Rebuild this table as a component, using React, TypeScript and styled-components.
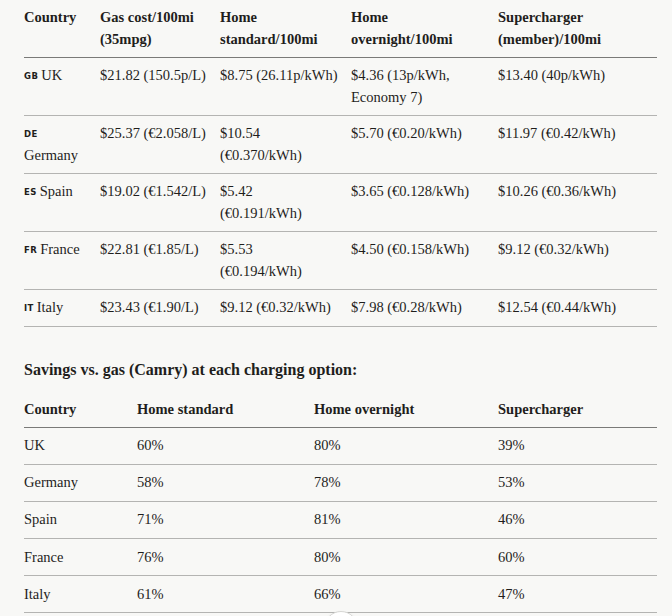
import React from "react";
import styled, { createGlobalStyle } from "styled-components";

const Global = createGlobalStyle`
  html, body {
    margin: 0;
    padding: 0;
    background: #f8f8f6;
  }
  body {
    font-family: "Liberation Serif", "Times New Roman", serif;
    color: #1f1e1c;
  }
`;

const Page = styled.div`
  padding: 0 15px 0 24px;
  min-height: 616px;
`;

const Table = styled.table`
  width: 633px;
  border-collapse: collapse;
  table-layout: fixed;
  font-size: 14.5px;
  line-height: 21.5px;
`;

const HeadCell = styled.th`
  text-align: left;
  vertical-align: top;
  font-weight: 700;
  padding: 7px 8px 7px 0;
  border-bottom: 1.5px solid #7a7a78;
  white-space: pre;
`;

const Row = styled.tr<{ $pad?: number }>`
  border-bottom: 1px solid #b4b4b2;
  td {
    padding-top: ${(p) => p.$pad ?? 7}px;
    padding-bottom: ${(p) => p.$pad ?? 7}px;
  }
`;

const Cell = styled.td`
  vertical-align: top;
  padding: 7px 8px 7px 0;
  white-space: pre;
`;

const Flag = styled.span`
  font-family: "DejaVu Sans", "Liberation Sans", sans-serif;
  font-size: 8.5px;
  font-weight: 600;
  letter-spacing: 0.4px;
  margin-right: 3px;
  vertical-align: 1px;
  line-height: 0;
`;

const Title = styled.h3`
  margin: 31.5px 0 9.5px;
  font-size: 16px;
  line-height: 24px;
  font-weight: 700;
`;

const ScrollButton = styled.div`
  position: fixed;
  left: 324px;
  top: 611px;
  width: 32px;
  height: 32px;
  border-radius: 50%;
  background: #ffffff;
  border: 1px solid #d6d6d3;
  box-shadow: 0 1px 3px rgba(0, 0, 0, 0.08);
`;

type CostRow = { code: string; name: string; cells: string[] };

const costHeaders = [
  "Country",
  "Gas cost/100mi\n(35mpg)",
  "Home\nstandard/100mi",
  "Home\novernight/100mi",
  "Supercharger\n(member)/100mi",
];

const costWidths = [76, 120, 131, 147, 159];

const costRows: CostRow[] = [
  {
    code: "GB",
    name: "UK",
    cells: ["$21.82 (150.5p/L)", "$8.75 (26.11p/kWh)", "$4.36 (13p/kWh,\nEconomy 7)", "$13.40 (40p/kWh)"],
  },
  {
    code: "DE",
    name: "\nGermany",
    cells: ["$25.37 (€2.058/L)", "$10.54\n(€0.370/kWh)", "$5.70 (€0.20/kWh)", "$11.97 (€0.42/kWh)"],
  },
  {
    code: "ES",
    name: "Spain",
    cells: ["$19.02 (€1.542/L)", "$5.42\n(€0.191/kWh)", "$3.65 (€0.128/kWh)", "$10.26 (€0.36/kWh)"],
  },
  {
    code: "FR",
    name: "France",
    cells: ["$22.81 (€1.85/L)", "$5.53\n(€0.194/kWh)", "$4.50 (€0.158/kWh)", "$9.12 (€0.32/kWh)"],
  },
  {
    code: "IT",
    name: "Italy",
    cells: ["$23.43 (€1.90/L)", "$9.12 (€0.32/kWh)", "$7.98 (€0.28/kWh)", "$12.54 (€0.44/kWh)"],
  },
];

const savingsHeaders = ["Country", "Home standard", "Home overnight", "Supercharger"];
const savingsWidths = [113, 177, 184, 159];
const savingsRows: string[][] = [
  ["UK", "60%", "80%", "39%"],
  ["Germany", "58%", "78%", "53%"],
  ["Spain", "71%", "81%", "46%"],
  ["France", "76%", "80%", "60%"],
  ["Italy", "61%", "66%", "47%"],
];

export default function App() {
  return (
    <Page>
      <Global />
      <Table>
        <colgroup>
          {costWidths.map((w, i) => (
            <col key={i} style={{ width: w }} />
          ))}
        </colgroup>
        <thead>
          <tr>
            {costHeaders.map((h) => (
              <HeadCell key={h}>{h}</HeadCell>
            ))}
          </tr>
        </thead>
        <tbody>
          {costRows.map((r) => (
            <Row key={r.code}>
              <Cell>
                <Flag>{r.code}</Flag>
                {r.name}
              </Cell>
              {r.cells.map((c, i) => (
                <Cell key={i}>{c}</Cell>
              ))}
            </Row>
          ))}
        </tbody>
      </Table>

      <Title>Savings vs. gas (Camry) at each charging option:</Title>

      <Table>
        <colgroup>
          {savingsWidths.map((w, i) => (
            <col key={i} style={{ width: w }} />
          ))}
        </colgroup>
        <thead>
          <tr>
            {savingsHeaders.map((h) => (
              <HeadCell key={h}>{h}</HeadCell>
            ))}
          </tr>
        </thead>
        <tbody>
          {savingsRows.map((r) => (
            <Row key={r[0]} $pad={7.3}>
              {r.map((c, i) => (
                <Cell key={i}>{c}</Cell>
              ))}
            </Row>
          ))}
        </tbody>
      </Table>
      <ScrollButton />
    </Page>
  );
}
